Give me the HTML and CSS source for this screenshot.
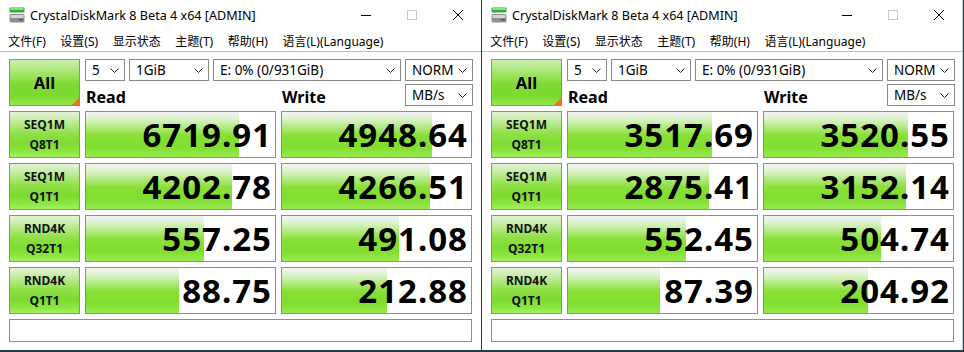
FILE: index.html
```html
<!DOCTYPE html>
<html lang="zh-CN">
<head>
<meta charset="utf-8">
<title>CrystalDiskMark</title>
<link rel="stylesheet" href="styles.css">
</head>
<body>
<div class="desk">
  <div class="win">
    <div class="titlebar">
      <svg class="appicon" width="16" height="16" viewBox="0 0 16 16"><rect x="0.5" y="0.5" width="15" height="5" rx="1" fill="#36a844"/><rect x="1.5" y="1" width="13" height="2" fill="#8fe27f"/><rect x="0.5" y="7" width="15" height="8.5" rx="1.5" fill="#8f8f8f"/><rect x="1.5" y="8" width="13" height="3" fill="#d4d4d4"/><rect x="10" y="12" width="4" height="1.5" fill="#555"/></svg>
      <span class="title">CrystalDiskMark 8 Beta 4 x64 [ADMIN]</span>
      <div class="controls">
        <span class="ctl"><svg width="10" height="10" viewBox="0 0 10 10"><line x1="0" y1="5.5" x2="10" y2="5.5" stroke="#000" stroke-width="1"/></svg></span>
        <span class="ctl"><svg width="10" height="10" viewBox="0 0 10 10"><rect x="0.5" y="0.5" width="9" height="9" fill="none" stroke="#c8c8c8" stroke-width="1"/></svg></span>
        <span class="ctl"><svg width="10" height="10" viewBox="0 0 10 10"><path d="M0 0 L10 10 M10 0 L0 10" stroke="#000" stroke-width="1"/></svg></span>
      </div>
    </div>
    <div class="menubar">
      <span class="mi">文件(F)</span><span class="mi">设置(S)</span><span class="mi">显示状态</span><span class="mi">主题(T)</span><span class="mi">帮助(H)</span><span class="mi">语言(L)(Language)</span>
    </div>
    <div class="content">
      <div class="top">
        <div class="all">All<span class="corner"></span></div>
        <div class="opts">
          <div class="optrow">
            <div class="sel s-count">5<svg class="chev" width="9" height="5" viewBox="0 0 9 5"><polyline points="0.5,0.5 4.5,4.5 8.5,0.5" fill="none" stroke="#222" stroke-width="1"/></svg></div>
            <div class="sel s-size">1GiB<svg class="chev" width="9" height="5" viewBox="0 0 9 5"><polyline points="0.5,0.5 4.5,4.5 8.5,0.5" fill="none" stroke="#222" stroke-width="1"/></svg></div>
            <div class="sel s-drive">E: 0% (0/931GiB)<svg class="chev" width="9" height="5" viewBox="0 0 9 5"><polyline points="0.5,0.5 4.5,4.5 8.5,0.5" fill="none" stroke="#222" stroke-width="1"/></svg></div>
            <div class="sel s-mode">NORM<svg class="chev" width="9" height="5" viewBox="0 0 9 5"><polyline points="0.5,0.5 4.5,4.5 8.5,0.5" fill="none" stroke="#222" stroke-width="1"/></svg></div>
          </div>
          <div class="optrow">
            <div class="hdr hdr-read">Read</div>
            <div class="hdr hdr-write">Write</div>
            <div class="sel s-mode">MB/s<svg class="chev" width="9" height="5" viewBox="0 0 9 5"><polyline points="0.5,0.5 4.5,4.5 8.5,0.5" fill="none" stroke="#222" stroke-width="1"/></svg></div>
          </div>
        </div>
      </div>
      <div class="grid">
        <div class="lbl">SEQ1M<br>Q8T1</div>
        <div class="val" style="--w:153px">6719.91</div>
        <div class="val" style="--w:150px">4948.64</div>
        <div class="lbl">SEQ1M<br>Q1T1</div>
        <div class="val" style="--w:146px">4202.78</div>
        <div class="val" style="--w:148px">4266.51</div>
        <div class="lbl">RND4K<br>Q32T1</div>
        <div class="val" style="--w:118px">557.25</div>
        <div class="val" style="--w:117px">491.08</div>
        <div class="lbl">RND4K<br>Q1T1</div>
        <div class="val" style="--w:93px">88.75</div>
        <div class="val" style="--w:105px">212.88</div>
      </div>
      <div class="status"></div>
    </div>
  </div>

  <div class="win win-right">
    <div class="titlebar">
      <svg class="appicon" width="16" height="16" viewBox="0 0 16 16"><rect x="0.5" y="0.5" width="15" height="5" rx="1" fill="#36a844"/><rect x="1.5" y="1" width="13" height="2" fill="#8fe27f"/><rect x="0.5" y="7" width="15" height="8.5" rx="1.5" fill="#8f8f8f"/><rect x="1.5" y="8" width="13" height="3" fill="#d4d4d4"/><rect x="10" y="12" width="4" height="1.5" fill="#555"/></svg>
      <span class="title">CrystalDiskMark 8 Beta 4 x64 [ADMIN]</span>
      <div class="controls">
        <span class="ctl"><svg width="10" height="10" viewBox="0 0 10 10"><line x1="0" y1="5.5" x2="10" y2="5.5" stroke="#000" stroke-width="1"/></svg></span>
        <span class="ctl"><svg width="10" height="10" viewBox="0 0 10 10"><rect x="0.5" y="0.5" width="9" height="9" fill="none" stroke="#c8c8c8" stroke-width="1"/></svg></span>
        <span class="ctl"><svg width="10" height="10" viewBox="0 0 10 10"><path d="M0 0 L10 10 M10 0 L0 10" stroke="#000" stroke-width="1"/></svg></span>
      </div>
    </div>
    <div class="menubar">
      <span class="mi">文件(F)</span><span class="mi">设置(S)</span><span class="mi">显示状态</span><span class="mi">主题(T)</span><span class="mi">帮助(H)</span><span class="mi">语言(L)(Language)</span>
    </div>
    <div class="content">
      <div class="top">
        <div class="all">All<span class="corner"></span></div>
        <div class="opts">
          <div class="optrow">
            <div class="sel s-count">5<svg class="chev" width="9" height="5" viewBox="0 0 9 5"><polyline points="0.5,0.5 4.5,4.5 8.5,0.5" fill="none" stroke="#222" stroke-width="1"/></svg></div>
            <div class="sel s-size">1GiB<svg class="chev" width="9" height="5" viewBox="0 0 9 5"><polyline points="0.5,0.5 4.5,4.5 8.5,0.5" fill="none" stroke="#222" stroke-width="1"/></svg></div>
            <div class="sel s-drive">E: 0% (0/931GiB)<svg class="chev" width="9" height="5" viewBox="0 0 9 5"><polyline points="0.5,0.5 4.5,4.5 8.5,0.5" fill="none" stroke="#222" stroke-width="1"/></svg></div>
            <div class="sel s-mode">NORM<svg class="chev" width="9" height="5" viewBox="0 0 9 5"><polyline points="0.5,0.5 4.5,4.5 8.5,0.5" fill="none" stroke="#222" stroke-width="1"/></svg></div>
          </div>
          <div class="optrow">
            <div class="hdr hdr-read">Read</div>
            <div class="hdr hdr-write">Write</div>
            <div class="sel s-mode">MB/s<svg class="chev" width="9" height="5" viewBox="0 0 9 5"><polyline points="0.5,0.5 4.5,4.5 8.5,0.5" fill="none" stroke="#222" stroke-width="1"/></svg></div>
          </div>
        </div>
      </div>
      <div class="grid">
        <div class="lbl">SEQ1M<br>Q8T1</div>
        <div class="val" style="--w:144px">3517.69</div>
        <div class="val" style="--w:144px">3520.55</div>
        <div class="lbl">SEQ1M<br>Q1T1</div>
        <div class="val" style="--w:141px">2875.41</div>
        <div class="val" style="--w:142px">3152.14</div>
        <div class="lbl">RND4K<br>Q32T1</div>
        <div class="val" style="--w:118px">552.45</div>
        <div class="val" style="--w:117px">504.74</div>
        <div class="lbl">RND4K<br>Q1T1</div>
        <div class="val" style="--w:92px">87.39</div>
        <div class="val" style="--w:104px">204.92</div>
      </div>
      <div class="status"></div>
    </div>
  </div>
</div>
</body>
</html>
```

FILE: styles.css
```css
html, body {
  margin: 0;
  padding: 0;
}
body {
  width: 964px;
  height: 352px;
  overflow: hidden;
  background: #243c4a;
  font-family: "Noto Sans", "Noto Sans CJK SC", sans-serif;
  color: #000;
}
.desk {
  display: flex;
  gap: 1px;
  height: 350px;
}
.win {
  width: 481px;
  height: 350px;
  background: #fff;
  box-sizing: border-box;
  display: flex;
  flex-direction: column;
}
.win-right {
  width: 481px;
  border-right: 1px solid #cfcfcf;
}
.titlebar {
  height: 30px;
  display: flex;
  align-items: center;
  flex: none;
}
.appicon {
  margin-left: 9px;
  flex: none;
}
.title {
  margin-left: 5px;
  font-size: 12.6px;
  white-space: nowrap;
}
.controls {
  margin-left: auto;
  display: flex;
  height: 30px;
}
.ctl {
  width: 46px;
  height: 30px;
  display: flex;
  align-items: center;
  justify-content: center;
}
.menubar {
  height: 21px;
  border-bottom: 1px solid #bdbdbd;
  display: flex;
  align-items: center;
  padding-left: 1px;
  flex: none;
  font-size: 12px;
  white-space: nowrap;
}
.mi {
  padding: 0 7.3px;
}
.content {
  padding: 7px 0 0 9px;
}
.top {
  display: flex;
  gap: 5px;
  height: 47px;
}
.all {
  width: 71px;
  height: 47px;
  box-sizing: border-box;
  border: 1px solid #8e8e8e;
  background: linear-gradient(to bottom, #cdeeb4 0%, #a9e674 25%, #7fda34 55%, #7cda2e 80%, #94e852 100%);
  display: flex;
  align-items: center;
  justify-content: center;
  font-weight: 700;
  font-size: 16.5px;
  position: relative;
}
.corner {
  position: absolute;
  right: 0;
  bottom: 0;
  width: 0;
  height: 0;
  border-left: 7px solid transparent;
  border-bottom: 7px solid #f0701e;
}
.opts {
  display: flex;
  flex-direction: column;
  gap: 3px;
  width: 388px;
}
.optrow {
  display: flex;
  gap: 4px;
  height: 22px;
}
.sel {
  height: 22px;
  box-sizing: border-box;
  border: 1px solid #8a8a8a;
  background: #fff;
  display: flex;
  align-items: center;
  justify-content: space-between;
  padding: 0 5px 0 6px;
  font-size: 13.5px;
  white-space: nowrap;
}
.chev {
  flex: none;
}
.s-count { width: 40px; }
.s-size { width: 80px; }
.s-drive { width: 188px; }
.s-mode { width: 68px; }
.hdr {
  font-weight: 700;
  font-size: 16px;
  line-height: 22px;
  padding-top: 2px;
  box-sizing: border-box;
}
.hdr-read {
  width: 192px;
  padding-left: 1px;
}
.hdr-write {
  flex: 1;
  padding-left: 1px;
}
.grid {
  margin-top: 5px;
  display: grid;
  grid-template-columns: 71px 191px 191px;
  grid-auto-rows: 47px;
  gap: 5px;
}
.lbl {
  box-sizing: border-box;
  border: 1px solid #8e8e8e;
  background: linear-gradient(to bottom, #e4f2d8 0%, #bfeb98 22%, #8fe046 48%, #7edb30 70%, #8ce640 88%, #a6ef66 100%);
  display: flex;
  align-items: center;
  justify-content: center;
  text-align: center;
  font-weight: 700;
  font-size: 12px;
  line-height: 20px;
  color: #111;
}
.val {
  box-sizing: border-box;
  border: 1px solid #8e8e8e;
  background-color: #fff;
  background-image: linear-gradient(to bottom, #f3f3f3 0%, #e0f3d2 14%, #b6ea88 32%, #88e036 52%, #80de2e 78%, #98ea52 100%);
  background-size: var(--w) 100%;
  background-repeat: no-repeat;
  text-align: right;
  font-weight: 700;
  font-size: 33px;
  letter-spacing: 1px;
  line-height: 45px;
  padding-right: 3px;
  white-space: nowrap;
}
.status {
  margin-top: 5px;
  width: 463px;
  height: 23px;
  box-sizing: border-box;
  border: 1px solid #8e8e8e;
  background: #fff;
}
```
